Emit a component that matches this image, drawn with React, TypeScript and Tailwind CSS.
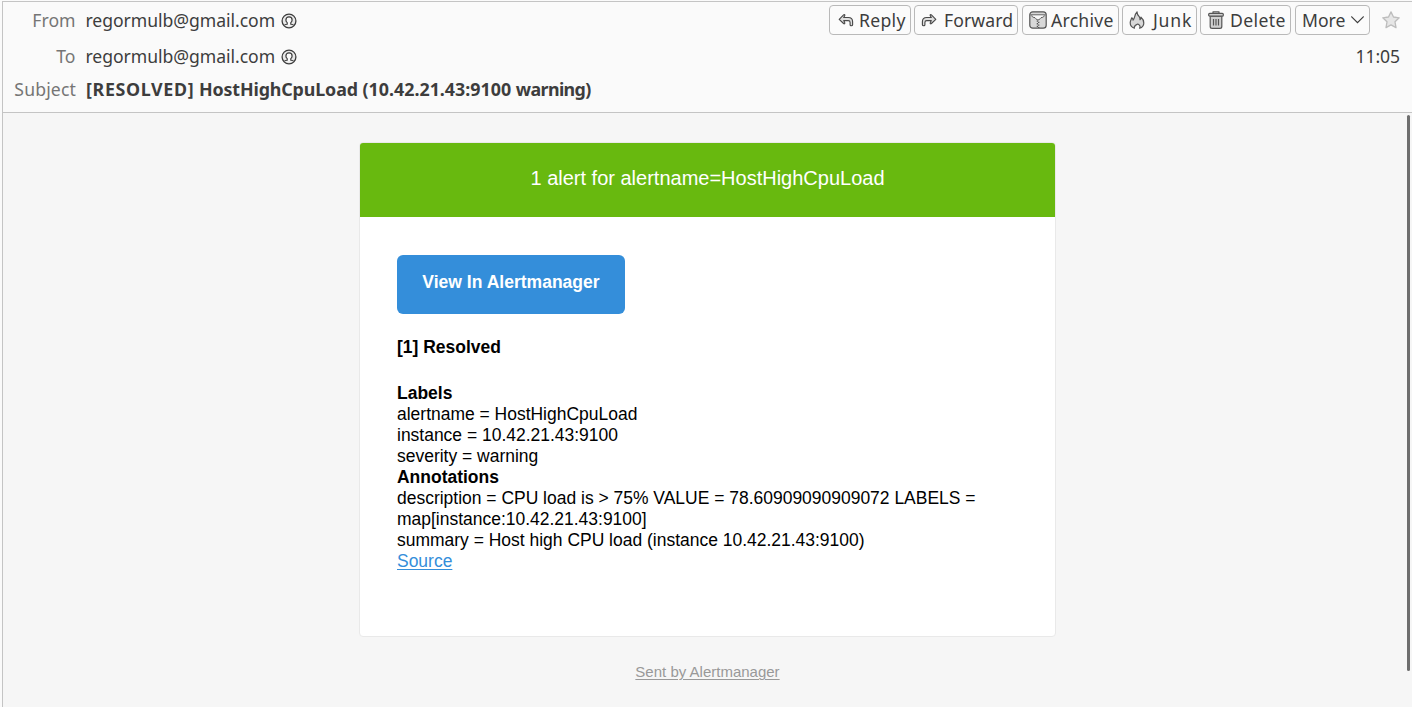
import type { ReactNode } from "react";

const ink = "#3d3d3d";

function ContactIcon() {
  return (
    <svg width="16" height="16" viewBox="0 0 16 16" fill="none" stroke={ink} className="ml-[5.500px] mt-px shrink-0">
      <circle cx="8" cy="8" r="6.9" strokeWidth="1.3" fill="#e8e8e8" />
      <path d="M3.300 12.400c.4-.9 1.400-1 2.900-1.200v-1.600C5.300 8.900 4.900 8 4.900 6.900 4.900 5.100 6.200 3.900 8 3.900s3.100 1.200 3.100 3c0 1.100-.4 2-1.300 2.700v1.600c1.500.2 2.500.3 2.900 1.200" strokeWidth="1.200" fill="#fafafa" strokeLinejoin="round" />
    </svg>
  );
}

function ReplyIcon({ flip = false }: { flip?: boolean }) {
  return (
    <svg width="16" height="16" viewBox="0 0 16 16" fill="#dedede" stroke="#4a4a4a" strokeWidth="1.15" strokeLinejoin="round" className={flip ? "-scale-x-100" : ""}>
      <path d="M1.200 7.300 5.600 2.900c.8-.7 1.600.1 1.100.9L5.700 5.500h4.700c2.600 0 4.200 1.500 4.200 4.200v3c0 1.400-2.500 1.400-2.500 0v-2.200c0-1.300-.6-1.900-1.900-1.900H5.700l1 2c.5.900-.3 1.600-1.100.9L1.200 7.300Z" />
    </svg>
  );
}

function ArchiveIcon() {
  return (
    <svg width="18" height="18" viewBox="0 0 18 18" fill="none" stroke="#555555" strokeLinejoin="round">
      <rect x=".8" y=".8" width="16.400" height="16.400" rx="3" fill="#d8d8d8" strokeWidth="1.200" />
      <path d="M1.500 3.900h15" strokeWidth="1" />
      <path d="M3 4.500h12c0 1.300-.9 1.900-2 1.900-1.600 0-2.100 2.600-4 2.600S6.600 6.400 5 6.400c-1.100 0-2-.6-2-1.900Z" fill="#fafafa" stroke="none" />
      <path d="M3 4.600c0 1.300.9 1.800 2 1.800 1.600 0 2.100 2.600 4 2.600s2.400-2.600 4-2.600c1.100 0 2-.5 2-1.800" strokeWidth="1" />
      <path d="M8.400 9.500v7.500" strokeWidth="1.300" strokeDasharray="1.300 1.300" />
      <path d="M9.700 10.800v6.200" strokeWidth="1.300" strokeDasharray="1.300 1.300" />
    </svg>
  );
}

function JunkIcon() {
  return (
    <svg width="16" height="18" viewBox="0 0 16 18" fill="#d8d8d8" stroke="#555555" strokeWidth="1.200" strokeLinejoin="round">
      <path d="M5.400 17.200C2.800 16.300 1.200 14.300 1.200 11.700c0-2 1-3.300 1.600-4.900.9.5 1.200 1.300 1.300 2.300C6 7.200 5.400 3.500 8 .8c0 2.400.9 3.600 2.200 4.900.8 1 .9 2 .8 3 .8-.6 1.100-1.400 1-2.500 1.900 1.600 2.800 3.600 2.800 5.700 0 2.500-1.600 4.400-4.200 5.300 1-1.500.4-2.900-1.800-4.200-2.900 1.200-4 2.500-3.400 4.200Z" />
    </svg>
  );
}

function TrashIcon() {
  return (
    <svg width="16" height="18" viewBox="0 0 16 18" fill="#d0d0d0" stroke="#555555" strokeWidth="1.200" strokeLinejoin="round">
      <path d="M5 2.300V.8h6v1.500" fill="none" />
      <path d="M2.200 5.200h11.600v10.200c0 1.100-.8 1.900-1.900 1.900H4.100c-1.100 0-1.900-.8-1.900-1.900Z" />
      <rect x=".7" y="2.300" width="14.600" height="2.900" rx="1" />
      <path d="M5.500 8v6.500M8 8v6.500M10.500 8v6.500" fill="none" strokeWidth="1.200" />
    </svg>
  );
}

function ToolButton({ className, children }: { className: string; children: ReactNode }) {
  return (
    <button className={`flex h-[30px] shrink-0 items-center rounded-[4px] border border-[#b9b9b9] bg-[#fbfbfb] ${className}`}>
      {children}
    </button>
  );
}

function Header() {
  return (
    <header className="flex h-[112px] shrink-0 justify-between border-b border-t border-[#c4c4c4] bg-[#fafafa] font-['Noto_Sans',sans-serif] text-[17.6px] leading-6 text-[#3d3d3d]">
      <div className="flex flex-col">
        <div className="flex h-[36px] items-center">
          <span className="w-[72.500px] text-right text-[#757575]">From</span>
          <span className="ml-[10px] tracking-[-0.05px]">regormulb@gmail.com</span>
          <ContactIcon />
        </div>
        <div className="flex h-[36px] items-center">
          <span className="w-[72.500px] text-right text-[#757575]">To</span>
          <span className="ml-[10px] tracking-[-0.05px]">regormulb@gmail.com</span>
          <ContactIcon />
        </div>
        <div className="flex h-[30px] items-center">
          <span className="w-[73px] text-right tracking-[0.15px] text-[#757575]">Subject</span>
          <span className="ml-[10px] whitespace-nowrap text-[17.850px] font-bold">
            <span className="tracking-[0.650px]">[RESOLVED]</span>{" "}
            <span className="tracking-[-0.120px]">HostHighCpuLoad</span>{" "}
            <span>(10.42.21.43:9100</span>{" "}
            <span className="tracking-[-0.600px]">warning)</span>
          </span>
        </div>
      </div>
      <div className="flex flex-col items-end pr-[12px]">
        <div className="flex h-[36px] items-center">
          <ToolButton className="mr-[3px] w-[82px] pl-2"><ReplyIcon /><span className="ml-[5px] tracking-[0.3px]">Reply</span></ToolButton>
          <ToolButton className="mr-[4px] w-[104px] pl-[6px]"><ReplyIcon flip /><span className="ml-[7px] tracking-[0.1px]">Forward</span></ToolButton>
          <ToolButton className="mr-[3px] w-[97px] pl-[6px]"><ArchiveIcon /><span className="ml-[4px] tracking-[0.25px]">Archive</span></ToolButton>
          <ToolButton className="mr-[3px] w-[75px] pl-[6px]"><JunkIcon /><span className="ml-[8px] tracking-[0.8px]">Junk</span></ToolButton>
          <ToolButton className="mr-[4px] w-[91px] pl-[7px]"><TrashIcon /><span className="ml-[6px] tracking-[0.4px]">Delete</span></ToolButton>
          <ToolButton className="w-[75px] pl-[6px]">
            <span>More</span>
            <svg width="13" height="8" viewBox="0 0 13 8" fill="none" stroke={ink} strokeWidth="1.200" strokeLinecap="round" className="ml-[6px]"><path d="m.7.800 5.800 5.900L12.300.800" /></svg>
          </ToolButton>
          <svg width="18" height="18" viewBox="0 0 18 18" fill="#e6e6e6" stroke="#bdbdbd" strokeWidth="1.300" strokeLinejoin="round" className="ml-[12px]">
            <path d="m9 .9 2.500 5.100 5.700.8-4.200 4 1 5.800L9 13.900l-5 2.700 1-5.800L.8 6.800 6.500 6Z" />
          </svg>
        </div>
        <div className="flex h-[36px] items-center tracking-[-0.1px]">11:05</div>
      </div>
    </header>
  );
}

function Message() {
  return (
    <article className="h-[495px] w-[697px] overflow-hidden rounded-[4px] border border-[#e9e9e9] bg-white">
      <h1 className="flex h-[74px] justify-center bg-[#68b90f] pt-[23px] text-[20px] leading-6 text-white">
        1 alert for alertname=HostHighCpuLoad
      </h1>
      <div className="px-[37px] pt-[38px] text-[17.480px] leading-[21px] text-black">
        <a className="flex h-[59px] w-[228px] justify-center rounded-[6px] bg-[#348eda] pt-[17px] text-[17.550px] font-bold text-white">View In Alertmanager</a>
        <p className="mt-[23px] font-bold">[1] Resolved</p>
        <p className="mt-[25px] font-bold">Labels</p>
        <p>alertname = HostHighCpuLoad</p>
        <p>instance = 10.42.21.43:9100</p>
        <p>severity = warning</p>
        <p className="font-bold">Annotations</p>
        <p>description = CPU load is &gt; 75% VALUE = 78.60909090909072 LABELS =</p>
        <p>map[instance:10.42.21.43:9100]</p>
        <p>summary = Host high CPU load (instance 10.42.21.43:9100)</p>
        <p><a className="text-[#348eda] underline decoration-1 underline-offset-2">Source</a></p>
      </div>
    </article>
  );
}

export default function App() {
  return (
    <div className="h-[707px] w-[1412px] overflow-hidden bg-[#fafafa] pl-[2px] pt-px">
      <div className="flex h-full flex-col border-l border-[#c4c4c4]">
        <Header />
        <main className="flex min-h-0 flex-1 justify-between bg-[#f6f6f6] font-['Liberation_Sans',sans-serif]">
          <div className="ml-[356px] flex flex-col items-center pt-[29px]">
            <Message />
            <a className="mt-[26px] text-[15px] leading-[18px] text-[#999999] underline decoration-1 underline-offset-2">Sent by Alertmanager</a>
          </div>
          <div className="mr-[2px] mt-[2px] h-[556px] w-[3px] rounded-full bg-[#6e6e6e]" />
        </main>
      </div>
    </div>
  );
}
